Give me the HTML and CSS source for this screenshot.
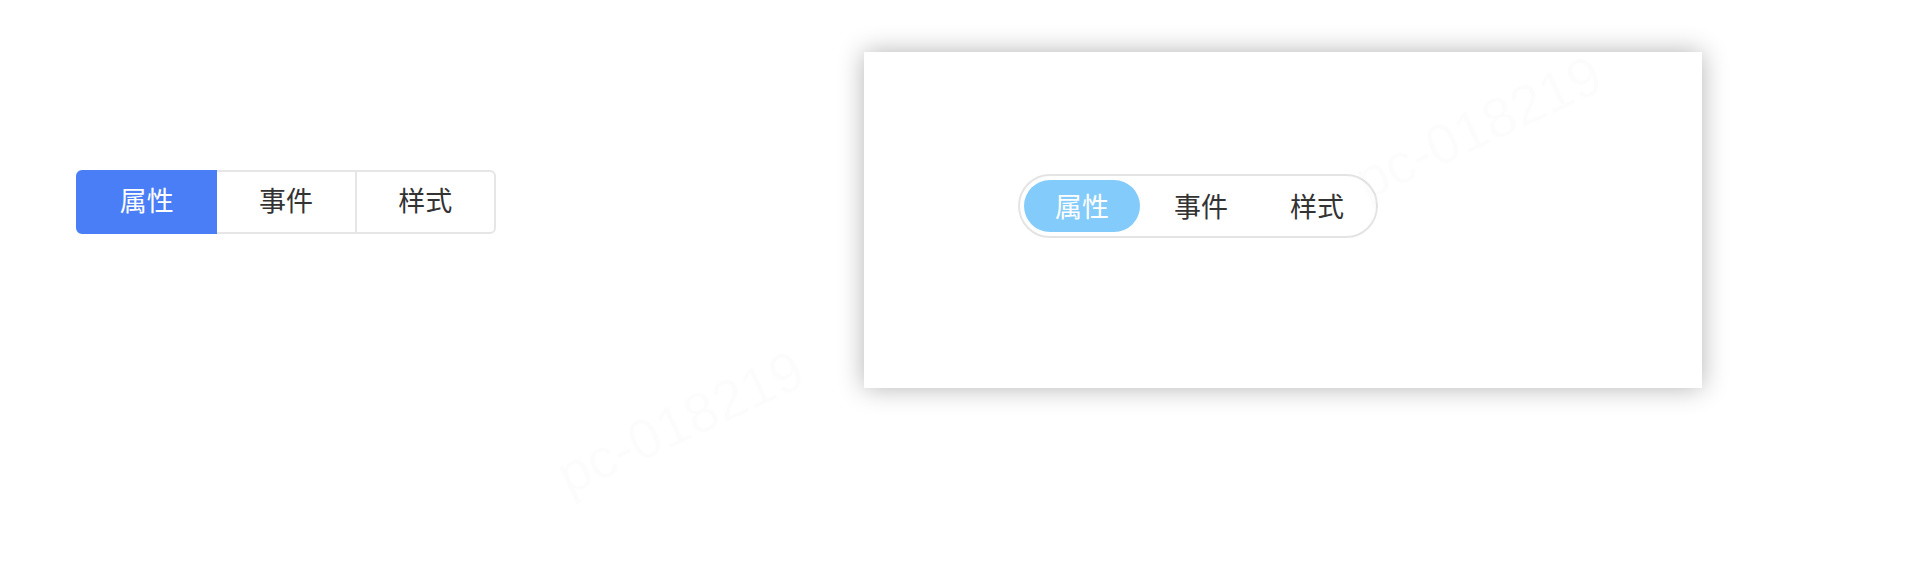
FILE: index.html
```html
<!DOCTYPE html>
<html lang="zh-CN">
<head>
<meta charset="utf-8">
<title>Segmented</title>
<link rel="stylesheet" href="styles.css">
</head>
<body>
<div class="page">
  <div class="seg">
    <div class="seg-item active">属性</div>
    <div class="seg-item">事件</div>
    <div class="seg-item">样式</div>
  </div>
  <div class="panel">
    <div class="pill">
      <div class="pill-item active">属性</div>
      <div class="pill-item">事件</div>
      <div class="pill-item">样式</div>
    </div>
  </div>
</div>
<div class="wm wm-1">pc-018219</div>
<div class="wm wm-2">pc-018219</div>
</body>
</html>
```

FILE: styles.css
```css
html, body {
  margin: 0;
  padding: 0;
  background: #ffffff;
  width: 1906px;
  height: 562px;
  overflow: hidden;
  font-family: "Noto Sans CJK SC", "Noto Sans", sans-serif;
}

.page {
  display: flex;
  align-items: flex-start;
  padding-left: 76px;
  gap: 368px;
}

.seg {
  display: flex;
  width: 420px;
  margin-top: 170px;
}

.seg-item {
  position: relative;
  box-sizing: border-box;
  width: 141.33px;
  height: 64px;
  padding-bottom: 5px;
  border: 2px solid #e6e6e6;
  display: flex;
  align-items: center;
  justify-content: center;
  font-size: 27px;
  color: #333333;
  background: #ffffff;
}

.seg-item + .seg-item {
  margin-left: -2px;
}

.seg-item:first-child {
  border-radius: 6px 0 0 6px;
}

.seg-item:last-child {
  border-radius: 0 6px 6px 0;
}

.seg-item.active {
  background: #4a7ef6;
  border-color: #4a7ef6;
  color: #ffffff;
  z-index: 1;
}

.panel {
  margin-top: 52px;
  width: 838px;
  height: 336px;
  background: #ffffff;
  box-shadow: 0 0 24px rgba(0, 0, 0, 0.3);
  padding: 122px 0 0 154px;
  box-sizing: border-box;
}

.pill {
  display: inline-flex;
  border: 2px solid #e4e4e4;
  border-radius: 32px;
  padding: 4px;
}

.pill-item {
  box-sizing: border-box;
  width: 116px;
  height: 52px;
  padding-bottom: 2px;
  border-radius: 26px;
  display: flex;
  align-items: center;
  justify-content: center;
  font-size: 27px;
  color: #333333;
}

.pill-item + .pill-item {
  padding-left: 6px;
}

.pill-item.active {
  background: #83cbfa;
  color: #ffffff;
}

.wm {
  position: absolute;
  font-family: "Liberation Sans", Arial, sans-serif;
  font-size: 56px;
  color: rgba(0, 0, 0, 0.012);
  white-space: nowrap;
  transform: translate(-50%, -50%) rotate(-25deg);
  pointer-events: none;
  z-index: 5;
}

.wm-1 {
  left: 680px;
  top: 422px;
}

.wm-2 {
  left: 1478px;
  top: 127px;
}
```
